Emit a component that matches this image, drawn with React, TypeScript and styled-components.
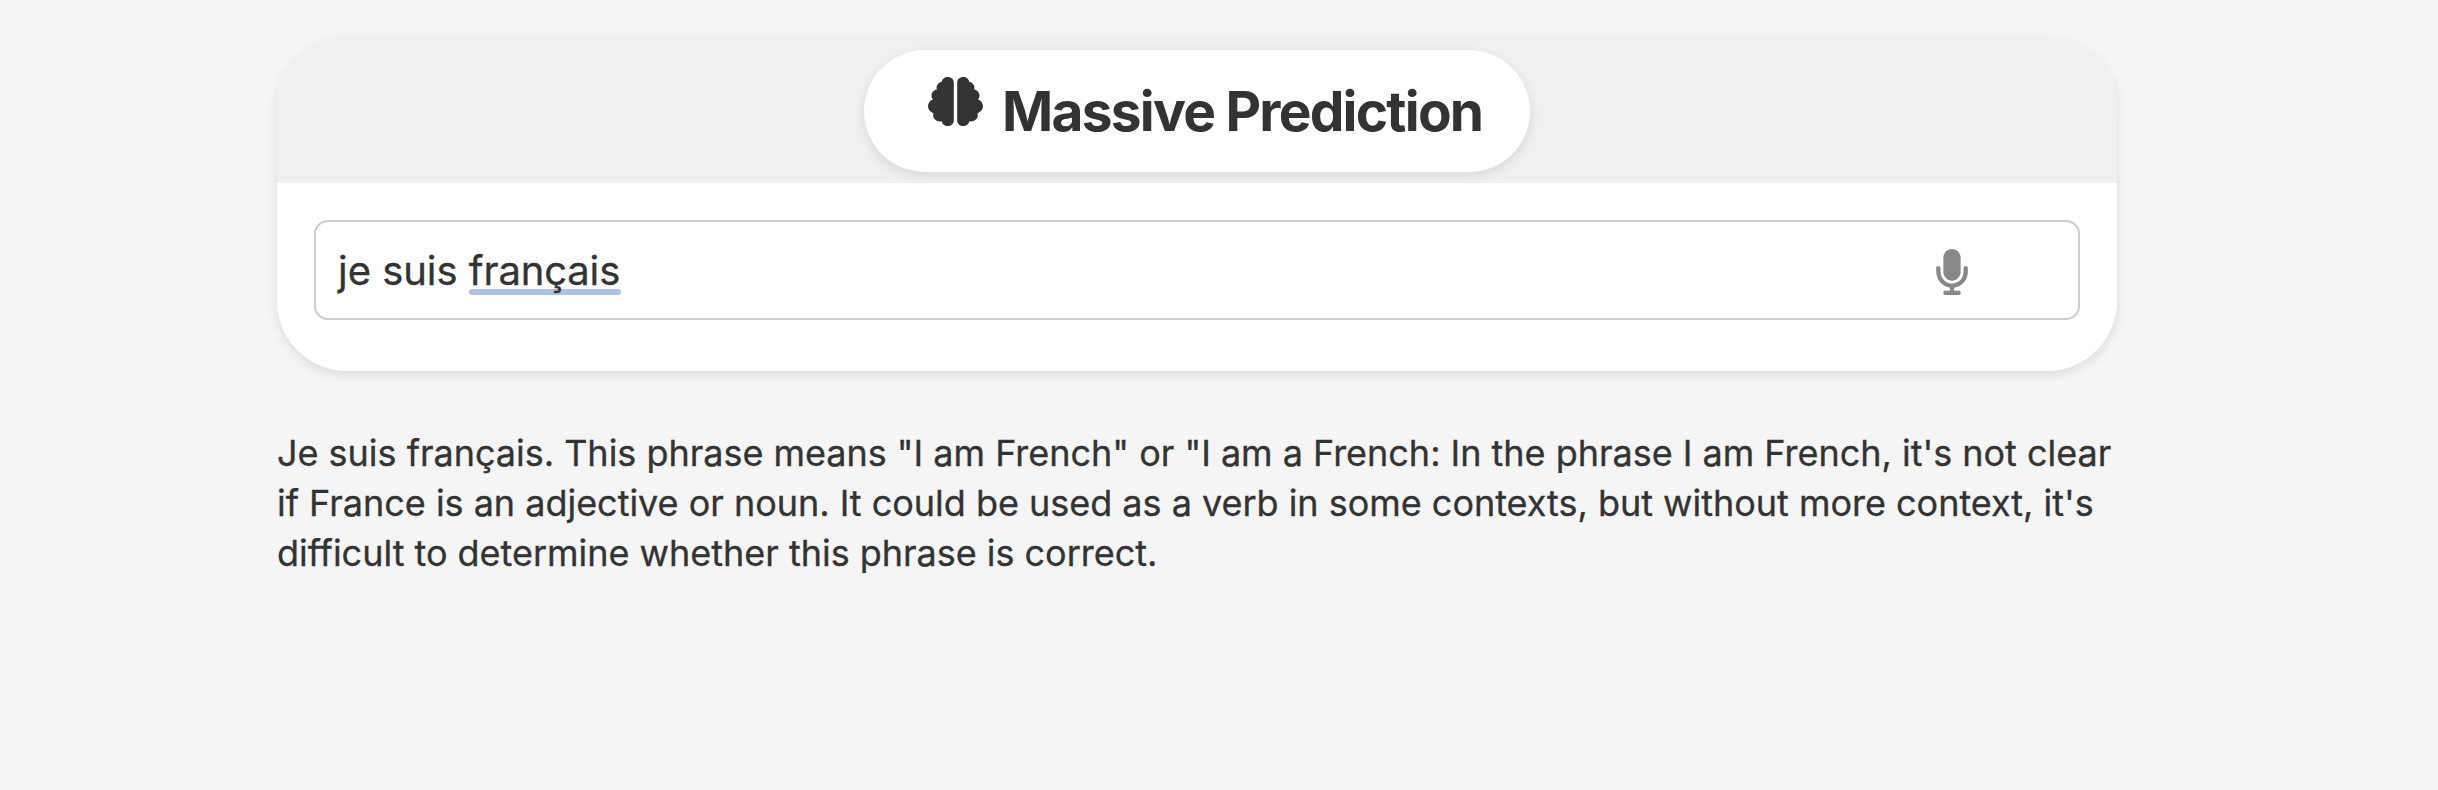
import React from "react";
import styled, { createGlobalStyle } from "styled-components";
import { FaMicrophone } from "react-icons/fa";
import { FaBrain } from "react-icons/fa6";

const GlobalStyle = createGlobalStyle`
  * { box-sizing: border-box; }
  body {
    margin: 0;
    background: #f5f5f5;
    color: #333;
    font-family: Inter, "Liberation Sans", sans-serif;
  }
`;

const Page = styled.main`
  width: 1840px;
  min-height: 790px;
  margin-left: 277px;
  padding-top: 37px;
`;

const Card = styled.section`
  height: 334px;
  border-radius: 70px;
  overflow: hidden;
  background: #fff;
  box-shadow: 0 4px 12px rgba(0, 0, 0, 0.1);
`;

const Header = styled.header`
  height: 146px;
  padding-top: 13px;
  display: flex;
  justify-content: center;
  background: #f0f0f0;
`;

const Pill = styled.div`
  width: 666px;
  height: 122px;
  padding-left: 64px;
  display: flex;
  align-items: flex-start;
  border-radius: 61px;
  background: #fff;
  box-shadow: 0 4px 12px rgba(0, 0, 0, 0.1);
`;

const BrainIcon = styled(FaBrain)`
  width: 55px;
  height: 49px;
  margin-top: 27px;
`;

const Title = styled.h1`
  margin: 0 0 0 19px;
  font-size: 55px;
  line-height: 123px;
  font-weight: 700;
  letter-spacing: -1.75px;
  white-space: nowrap;
`;

const Field = styled.div`
  height: 100px;
  margin: 37px 37px 0;
  padding: 0 110px 0 22px;
  display: flex;
  align-items: center;
  justify-content: space-between;
  border: 2px solid #ccc;
  border-radius: 14px;
  font-size: 40px;
  letter-spacing: -0.03px;
  -webkit-text-stroke: 0.3px #333;
`;

const Marked = styled.span`
  position: relative;
  z-index: 0;
  letter-spacing: -0.15px;

  &::after {
    content: "";
    position: absolute;
    z-index: -1;
    left: 0.5px;
    right: -0.5px;
    bottom: 0;
    height: 6px;
    border-radius: 3px;
    background: #adc0e8;
  }
`;

const MicIcon = styled(FaMicrophone)`
  width: 32px;
  height: 46px;
  margin-top: 4px;
  color: #888;
`;

const Answer = styled.p`
  margin: 57px 0 0;
  font-size: 36px;
  line-height: 50px;
  letter-spacing: -0.02px;
  -webkit-text-stroke: 0.3px #333;
  white-space: nowrap;
`;

export default function App() {
  return (
    <Page>
      <GlobalStyle />
      <Card>
        <Header>
          <Pill>
            <BrainIcon preserveAspectRatio="none" />
            <Title>Massive Prediction</Title>
          </Pill>
        </Header>
        <Field>
          <span>je suis <Marked>français</Marked></span>
          <MicIcon />
        </Field>
      </Card>
      <Answer>
        Je suis français. This phrase means "I am French" or "I am a French: In the phrase I am French, it's not clear<br />
        if France is an adjective or noun. It could be used as a verb in some contexts, but without more context, it's<br />
        difficult to determine whether this phrase is correct.
      </Answer>
    </Page>
  );
}
